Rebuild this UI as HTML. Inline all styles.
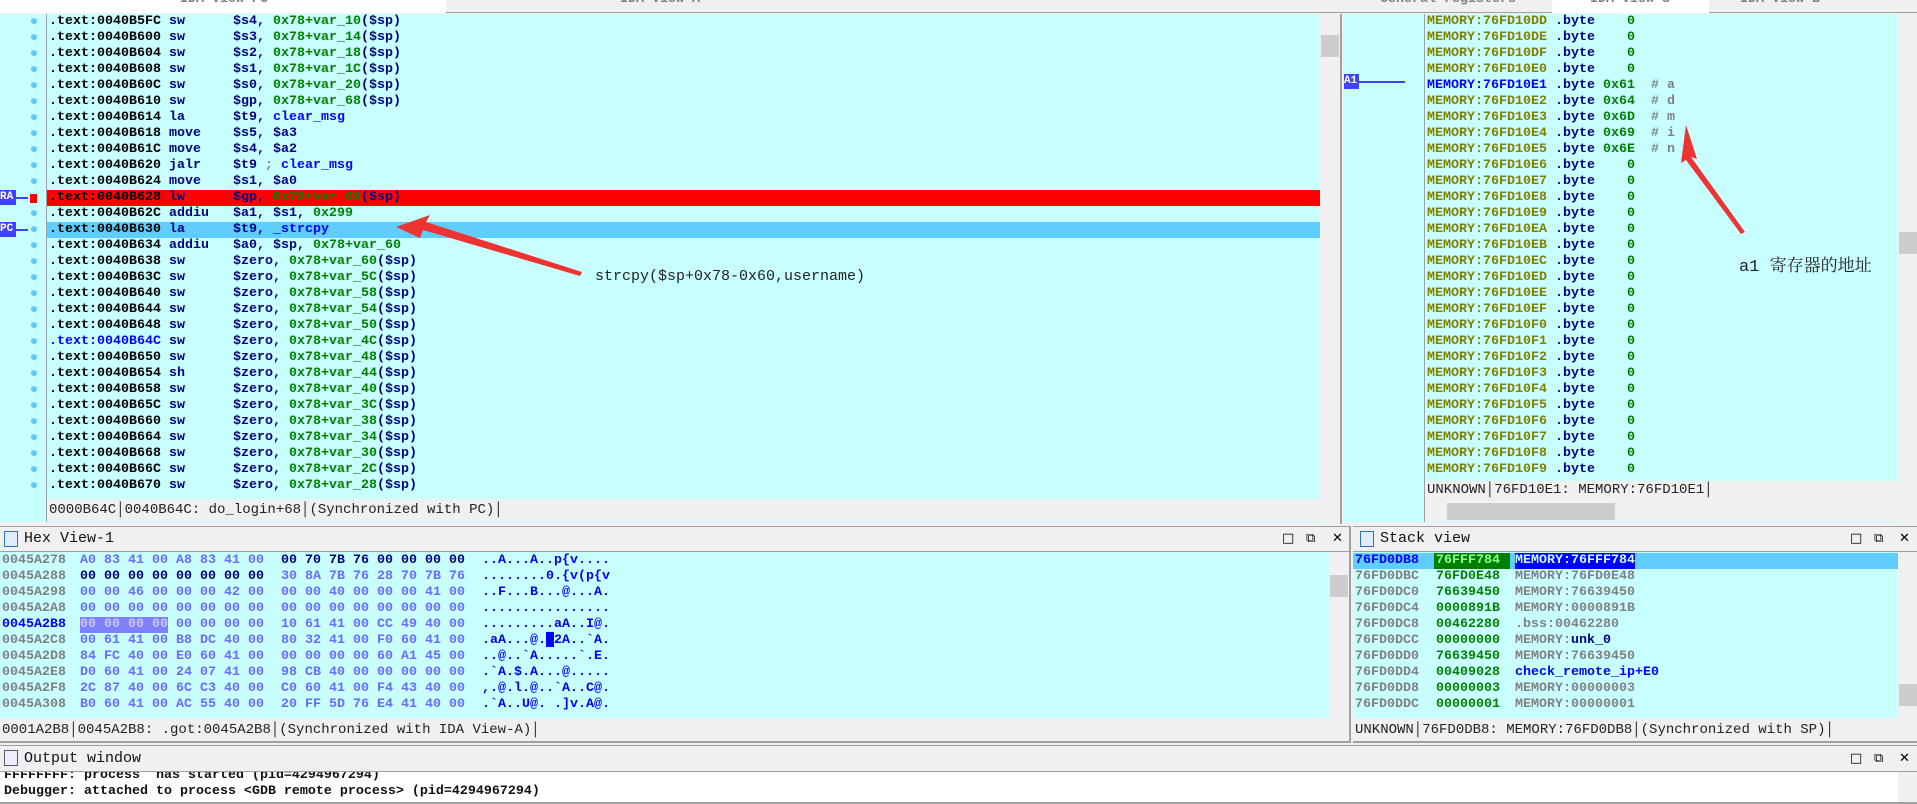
<!DOCTYPE html>
<html><head><meta charset="utf-8"><style>
*{margin:0;padding:0;box-sizing:border-box}
body{width:1917px;height:804px;overflow:hidden;background:#f0f0f0;position:relative;font-family:"Liberation Mono",monospace}
.a{position:absolute}
.m{font-family:"Liberation Mono",monospace;font-weight:bold;font-size:13.33px;line-height:16px;white-space:pre}
.cy{background:#c8ffff}
.bk{color:#000}.nv{color:#000080}.gr{color:#008000}.bl{color:#0000ff}.gy{color:#808080}.ol{color:#808000}.lb{color:#6a6aff}
.dot{position:absolute;width:6px;height:6px;border-radius:3px;background:#5ac8fa}
.st{font-family:"Liberation Mono",monospace;font-size:14px;line-height:20px;color:#222;white-space:pre}
.tb{position:absolute;background:#f0f0f0;border-top:1px solid #a0a0a0;border-bottom:1px solid #a0a0a0}
.tt{font-family:"Liberation Mono",monospace;font-size:15px;color:#111}
.ic{position:absolute;width:14px;height:16px;border:1px solid #3070c0;background:#dfeeff}
.btn{position:absolute;font-family:"DejaVu Sans",sans-serif;font-size:13px;color:#000}
</style></head><body>
<div class="a" style="left:0;top:0;width:1917px;height:13px;background:#f0f0f0;border-bottom:1px solid #a0a0a0"></div>
<div class="a" style="left:0;top:0;width:446px;height:13px;background:#fff"></div>
<div class="a" style="left:1552px;top:0;width:157px;height:13px;background:#fff"></div>
<div class="a m gy" style="left:180px;top:-8px">IDA View-PC</div>
<div class="a m gy" style="left:620px;top:-8px">IDA View-A</div>
<div class="a m gy" style="left:1380px;top:-8px">General registers</div>
<div class="a m gy" style="left:1590px;top:-8px">IDA View-S</div>
<div class="a m gy" style="left:1740px;top:-8px">IDA View-B</div>

<div class="a cy" style="left:0;top:14px;width:1340px;height:508px"></div>
<div class="a" style="left:46px;top:14px;width:1px;height:508px;background:#a0a0a0"></div>
<div class="a" style="left:1320px;top:14px;width:20px;height:508px;background:#f0f0f0"></div>
<div class="a" style="left:1321px;top:35px;width:18px;height:22px;background:#cdcdcd"></div>
<div class="a" style="left:1340px;top:14px;width:2px;height:510px;background:#a0a0a0"></div>
<div class="a" style="left:47px;top:190px;width:1273px;height:16px;background:#ff0000"></div>
<div class="a" style="left:47px;top:222px;width:1273px;height:16px;background:#5fcdfd"></div>
<div class="a m" style="left:0;top:190px;width:16px;height:15px;background:#4040ff;color:#fff;font-size:11px;line-height:15px">RA</div>
<div class="a" style="left:16px;top:197px;width:12px;height:2px;background:#4040ff"></div>
<div class="a" style="left:30px;top:194px;width:7px;height:9px;background:#f00"></div>
<div class="a m" style="left:0;top:222px;width:16px;height:15px;background:#4040ff;color:#fff;font-size:11px;line-height:15px">PC</div>
<div class="a" style="left:16px;top:229px;width:12px;height:2px;background:#4040ff"></div>
<div id="code" class="a m" style="left:49px;top:14px"></div>
<div id="dots1"></div>
<div class="a" style="left:47px;top:499px;width:1273px;height:22px;background:#f0f0f0"></div>
<div class="a st" style="left:49px;top:500px">0000B64C│0040B64C: do_login+68│(Synchronized with PC)│</div>

<div class="a cy" style="left:1343px;top:14px;width:574px;height:508px"></div>
<div class="a" style="left:1424px;top:14px;width:1px;height:508px;background:#a0a0a0"></div>
<div class="a" style="left:1898px;top:14px;width:19px;height:508px;background:#f0f0f0"></div>
<div class="a" style="left:1899px;top:232px;width:18px;height:22px;background:#cdcdcd"></div>
<div class="a m" style="left:1344px;top:74px;width:15px;height:15px;background:#4040ff;color:#fff;font-size:11px;line-height:15px">A1</div>
<div class="a" style="left:1359px;top:81px;width:46px;height:2px;background:#4040ff"></div>
<div id="mem" class="a m" style="left:1427px;top:14px"></div>
<div class="a" style="left:1425px;top:481px;width:473px;height:20px;background:#f0f0f0"></div>
<div class="a st" style="left:1427px;top:480px">UNKNOWN│76FD10E1: MEMORY:76FD10E1│</div>
<div class="a" style="left:1425px;top:501px;width:473px;height:20px;background:#f0f0f0"></div>
<div class="a" style="left:1447px;top:503px;width:168px;height:17px;background:#cdcdcd"></div>

<svg class="a" style="left:0;top:0" width="1917" height="804">
<polygon points="396,227 430,215 426,222 582,272 580,276 423,230 420,238" fill="#ee3333"/>
<polygon points="1686,125 1697,159 1691,157 1745,232 1741,234 1686,160 1681,163" fill="#ee3333"/>
</svg>
<div class="a" style="left:595px;top:268px;font-family:'Liberation Mono',monospace;font-size:15px;color:#222;white-space:pre">strcpy($sp+0x78-0x60,username)</div>
<div class="a" style="left:1739px;top:251px;font-family:'Liberation Mono','Noto Serif CJK SC',serif;font-size:17px;color:#222;white-space:pre">a1 寄存器的地址</div>

<div class="tb" style="left:0;top:526px;width:1350px;height:26px"></div>
<div class="ic" style="left:4px;top:531px"></div>
<div class="a tt" style="left:24px;top:530px">Hex View-1</div>
<div class="btn" style="left:1282px;top:531px">□</div><div class="btn" style="left:1306px;top:531px">⧉</div><div class="btn" style="left:1332px;top:531px">✕</div>
<div class="a cy" style="left:0;top:552px;width:1329px;height:166px"></div>
<div class="a" style="left:1329px;top:552px;width:20px;height:188px;background:#f0f0f0"></div>
<div class="a" style="left:1330px;top:575px;width:18px;height:22px;background:#cdcdcd"></div>
<div class="a" style="left:1349px;top:526px;width:2px;height:216px;background:#a0a0a0"></div>
<div id="hex"></div>
<div class="a st" style="left:2px;top:720px">0001A2B8│0045A2B8: .got:0045A2B8│(Synchronized with IDA View-A)│</div>
<div class="a" style="left:0;top:741px;width:1351px;height:2px;background:#a0a0a0"></div>

<div class="tb" style="left:1353px;top:526px;width:564px;height:26px"></div>
<div class="ic" style="left:1360px;top:531px"></div>
<div class="a tt" style="left:1380px;top:530px">Stack view</div>
<div class="btn" style="left:1850px;top:531px">□</div><div class="btn" style="left:1874px;top:531px">⧉</div><div class="btn" style="left:1899px;top:531px">✕</div>
<div class="a cy" style="left:1353px;top:552px;width:545px;height:166px"></div>
<div class="a" style="left:1898px;top:552px;width:19px;height:188px;background:#f0f0f0"></div>
<div class="a" style="left:1899px;top:684px;width:18px;height:22px;background:#cdcdcd"></div>
<div class="a" style="left:1353px;top:553px;width:545px;height:16px;background:#5fcdfd"></div>
<div id="stk"></div>
<div class="a st" style="left:1355px;top:720px">UNKNOWN│76FD0DB8: MEMORY:76FD0DB8│(Synchronized with SP)│</div>
<div class="a" style="left:1353px;top:741px;width:564px;height:2px;background:#a0a0a0"></div>

<div class="tb" style="left:0;top:745px;width:1917px;height:27px"></div>
<div class="ic" style="left:4px;top:750px;border-color:#557;background:#eef"></div>
<div class="a tt" style="left:24px;top:750px">Output window</div>
<div class="btn" style="left:1850px;top:751px">□</div><div class="btn" style="left:1874px;top:751px">⧉</div><div class="btn" style="left:1899px;top:751px">✕</div>
<div class="a" style="left:0;top:772px;width:1898px;height:30px;background:#fff;overflow:hidden">
<div class="a m" style="left:4px;top:-4px;color:#111">FFFFFFFF: process  has started (pid=4294967294)</div>
<div class="a m" style="left:4px;top:12px;color:#111">Debugger: attached to process &lt;GDB remote process&gt; (pid=4294967294)</div>
</div>
<div class="a" style="left:0;top:802px;width:1917px;height:2px;background:#a0a0a0"></div>

<script>
var code=[["5FC","sw","$s4","10"],["600","sw","$s3","14"],["604","sw","$s2","18"],["608","sw","$s1","1C"],["60C","sw","$s0","20"],["610","sw","$gp","68"],
["614","la","X1"],["618","move","X2","$s5, $a3"],["61C","move","X2","$s4, $a2"],["620","jalr","X3"],["624","move","X2","$s1, $a0"],["628","lw","$gp","68"],
["62C","addiu","X4"],["630","la","X5"],["634","addiu","X6"]];
var z=["60","5C","58","54","50","4C","48","44","40","3C","38","34","30","2C","28"];
z.forEach(function(v,i){code.push([(0x638+i*4).toString(16).toUpperCase(),i==7?"sh":"sw","$zero",v]);});
function pad(s,n){while(s.length<n)s+=" ";return s;}
var h="";
code.forEach(function(c,i){
 var addr=".text:0040B"+c[0];
 var ac=(c[0]=="64C")?"bl":"bk";
 var ops;
 if(c[2]=="X1")ops='<span class="nv">$t9, </span><span class="bl">clear_msg</span>';
 else if(c[2]=="X2")ops='<span class="nv">'+c[3]+'</span>';
 else if(c[2]=="X3")ops='<span class="nv">$t9 </span><span class="gy">;</span><span class="bl"> clear_msg</span>';
 else if(c[2]=="X4")ops='<span class="nv">$a1, $s1, </span><span class="gr">0x299</span>';
 else if(c[2]=="X5")ops='<span class="nv">$t9, </span><span class="bl">_strcpy</span>';
 else if(c[2]=="X6")ops='<span class="nv">$a0, $sp, </span><span class="gr">0x78+var_60</span>';
 else ops='<span class="nv">'+c[2]+', </span><span class="gr">0x78+var_'+c[3]+'</span><span class="nv">($sp)</span>';
 h+='<div><span class="'+ac+'">'+addr+' </span><span class="nv">'+pad(c[1],8)+'</span>'+ops+'</div>';
});
document.getElementById("code").innerHTML=h;
var d="";
for(var i=0;i<30;i++){if(i!=11)d+='<div class="dot" style="left:31px;top:'+(18+i*16)+'px"></div>';}
for(var i=0;i<29;i++)d+='<div class="dot" style="left:1410px;top:'+(18+i*16)+'px"></div>';
document.getElementById("dots1").innerHTML=d;
var m="",ch={"E1":["0x61","a"],"E2":["0x64","d"],"E3":["0x6D","m"],"E4":["0x69","i"],"E5":["0x6E","n"]};
for(var i=0xDD;i<=0xF9;i++){var k=i.toString(16).toUpperCase();
 var ac=k=="E1"?"bl":"ol";
 if(ch[k])m+='<div><span class="'+ac+'">MEMORY:76FD10'+k+'</span> <span class="nv">.byte</span> <span class="gr">'+ch[k][0]+'</span>  <span class="gy"># '+ch[k][1]+'</span></div>';
 else m+='<div><span class="ol">MEMORY:76FD10'+k+'</span> <span class="nv">.byte</span>    <span class="gr">0</span></div>';}
document.getElementById("mem").innerHTML=m;
var hx=[["0045A278","A0 83 41 00 A8 83 41 00","00 70 7B 76 00 00 00 00","..A...A..p{v....",1],
["0045A288","00 00 00 00 00 00 00 00","30 8A 7B 76 28 70 7B 76","........0.{v(p{v",2],
["0045A298","00 00 46 00 00 00 42 00","00 00 40 00 00 00 41 00","..F...B...@...A.",0],
["0045A2A8","00 00 00 00 00 00 00 00","00 00 00 00 00 00 00 00","................",0],
["0045A2B8","00 00 00 00 00 00 00 00","10 61 41 00 CC 49 40 00",".........aA..I@.",3],
["0045A2C8","00 61 41 00 B8 DC 40 00","80 32 41 00 F0 60 41 00",".aA...@.\u25882A..`A.",0],
["0045A2D8","84 FC 40 00 E0 60 41 00","00 00 00 00 60 A1 45 00","..@..`A.....`.E.",0],
["0045A2E8","D0 60 41 00 24 07 41 00","98 CB 40 00 00 00 00 00",".`A.$.A...@.....",0],
["0045A2F8","2C 87 40 00 6C C3 40 00","C0 60 41 00 F4 43 40 00",",.@.l.@..`A..C@.",0],
["0045A308","B0 60 41 00 AC 55 40 00","20 FF 5D 76 E4 41 40 00",".`A..U@. .]v.A@.",0]];
var s="";
hx.forEach(function(r,i){var t=553+i*16;
 s+='<div class="a m '+(r[4]==3?"bl":"gy")+'" style="left:2px;top:'+t+'px">'+r[0]+'</div>';
 if(r[4]==3){s+='<div class="a" style="left:80px;top:'+t+'px;width:88px;height:16px;background:#8080ff"></div><div class="a m" style="left:80px;top:'+t+'px;color:#c8c8ff">00 00 00 00</div><div class="a m lb" style="left:176px;top:'+t+'px">00 00 00 00</div>';}
 else s+='<div class="a m '+(r[4]==2?"nv":"lb")+'" style="left:80px;top:'+t+'px">'+r[1]+'</div>';
 s+='<div class="a m '+(r[4]==1?"nv":"lb")+'" style="left:281px;top:'+t+'px">'+r[2]+'</div>';
 s+='<div class="a m bl" style="left:482px;top:'+t+'px">'+r[3]+'</div>';});
document.getElementById("hex").innerHTML=s;
var st=[["76FD0DB8","76FFF784","MEMORY:76FFF784"],["76FD0DBC","76FD0E48","MEMORY:76FD0E48"],["76FD0DC0","76639450","MEMORY:76639450"],["76FD0DC4","0000891B","MEMORY:0000891B"],["76FD0DC8","00462280",".bss:00462280"],["76FD0DCC","00000000","MEMORY:<span class=nv>unk_0</span>"],["76FD0DD0","76639450","MEMORY:76639450"],["76FD0DD4","00409028","<span class=bl>check_remote_ip+E0</span>"],["76FD0DD8","00000003","MEMORY:00000003"],["76FD0DDC","00000001","MEMORY:00000001"]];
s="";
st.forEach(function(r,i){var t=553+i*16;
 if(i==0){s+='<div class="a m bl" style="left:1355px;top:'+t+'px">'+r[0]+'</div><div class="a m" style="left:1434px;top:'+t+'px;width:76px;height:16px;background:#008000;color:#90ff90;padding-left:2px">'+r[1]+'</div><div class="a m" style="left:1515px;top:'+t+'px;background:#0000ff;color:#c8ffff">'+r[2]+'</div>';}
 else s+='<div class="a m gy" style="left:1355px;top:'+t+'px">'+r[0]+'</div><div class="a m gr" style="left:1436px;top:'+t+'px">'+r[1]+'</div><div class="a m gy" style="left:1515px;top:'+t+'px">'+r[2]+'</div>';});
document.getElementById("stk").innerHTML=s;
</script>
</body></html>
